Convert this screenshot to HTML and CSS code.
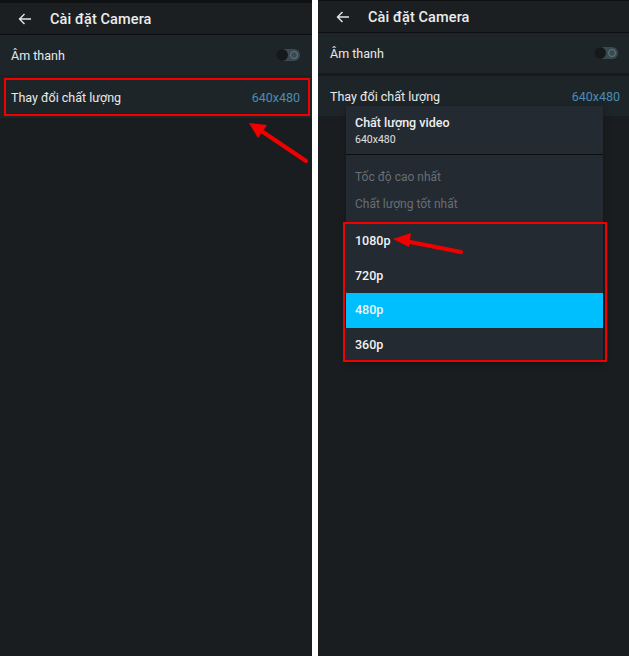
FILE: index.html
```html
<!DOCTYPE html>
<html lang="vi">
<head>
<meta charset="utf-8">
<link rel="stylesheet" href="styles.css">
</head>
<body>
<div class="page">
  <section class="panel panel-left">
    <div class="topstrip"></div>
    <header class="appbar">
      <svg class="back" viewBox="0 0 14 12" width="14" height="12"><path d="M13 6H1.5M6.5 1L1.5 6l5 5" fill="none" stroke="#e6e6e6" stroke-width="1.4"/></svg>
      <h1 class="title">Cài đặt Camera</h1>
    </header>
    <div class="rows">
      <div class="row"><span class="label">Âm thanh</span><span class="toggle"><span class="knob"></span><span class="ring"></span></span></div>
      <div class="row tall"><span class="label">Thay đổi chất lượng</span><span class="value">640x480</span></div>
    </div>
    <div class="mark mark-left"></div>
    <svg class="arrow arrow-left" width="312" height="200" viewBox="0 0 312 200">
      <line x1="306" y1="161" x2="260" y2="130" stroke="#f20000" stroke-width="4" stroke-linecap="round"/>
      <polygon points="249,123 267,125 258,138" fill="#f20000"/>
    </svg>
  </section>
  <section class="panel panel-right">
    <div class="topstrip thin"></div>
    <header class="appbar">
      <svg class="back" viewBox="0 0 14 12" width="14" height="12"><path d="M13 6H1.5M6.5 1L1.5 6l5 5" fill="none" stroke="#e6e6e6" stroke-width="1.4"/></svg>
      <h1 class="title">Cài đặt Camera</h1>
    </header>
    <div class="rows split">
      <div class="row"><span class="label">Âm thanh</span><span class="toggle"><span class="knob"></span><span class="ring"></span></span></div>
      <div class="row"><span class="label">Thay đổi chất lượng</span><span class="value">640x480</span></div>
    </div>
    <div class="menu">
      <div class="menu-head">
        <div class="menu-title">Chất lượng video</div>
        <div class="menu-sub">640x480</div>
      </div>
      <div class="menu-disabled">
        <div class="dis">Tốc độ cao nhất</div>
        <div class="dis">Chất lượng tốt nhất</div>
      </div>
      <div class="menu-options">
        <div class="opt">1080p</div>
        <div class="opt">720p</div>
        <div class="opt active">480p</div>
        <div class="opt">360p</div>
      </div>
    </div>
    <div class="mark mark-right"></div>
    <svg class="arrow arrow-right" width="311" height="300" viewBox="0 0 311 300">
      <line x1="143" y1="252" x2="87" y2="241" stroke="#f20000" stroke-width="4" stroke-linecap="round"/>
      <polygon points="75,239 93,233 91,247" fill="#f20000"/>
    </svg>
  </section>
</div>
</body>
</html>
```
FILE: styles.css
```css
* { box-sizing: border-box; margin: 0; padding: 0; }
html, body { background: #ffffff; }
body { width: 629px; height: 656px; overflow: hidden; font-family: Roboto, "Noto Sans", "Liberation Sans", sans-serif; }
.page { display: flex; gap: 6px; height: 656px; }
.panel { position: relative; background: #1a1d20; height: 656px; display: flex; flex-direction: column; }
.panel-left { width: 312px; }
.panel-right { width: 311px; }
.topstrip { height: 3px; background: #0f1113; }
.topstrip.thin { height: 1px; }
.appbar { height: 32px; background: #1c1f22; border-bottom: 1px solid #0d0f11; display: flex; align-items: center; padding-left: 18px; padding-top: 1px; }
.back { display: block; margin-right: 18px; margin-top: -1px; }
.title { font-size: 14.5px; font-weight: 500; color: #ececec; letter-spacing: 0.1px; }
.rows { display: flex; flex-direction: column; gap: 2px; background: #1b2023; }
.rows.split { gap: 3px; background: #171a1d; }
.row { height: 40px; background: #1e2529; display: flex; align-items: center; justify-content: space-between; padding: 0 12px 0 11px; }
.row.tall { height: 41px; }
.panel-right .row { padding: 0 9px 0 12px; }
.label { font-size: 12.5px; color: #e9e9e9; }
.value { font-size: 12.5px; color: #4a8db5; }
.toggle { position: relative; width: 24px; height: 12px; border-radius: 6px; background: #3a4950; }
.panel-right .toggle { margin-right: 2px; }
.knob { position: absolute; left: 0; top: 0; width: 12px; height: 12px; border-radius: 50%; background: #16191b; }
.ring { position: absolute; right: 2px; top: 2px; width: 8px; height: 8px; border-radius: 50%; border: 1px solid #5f7883; }
.mark { position: absolute; border: 2px solid #f20000; }
.mark-left { left: 4px; top: 78px; width: 306px; height: 38px; }
.mark-right { left: 25px; top: 222px; width: 264px; height: 140px; }
.arrow { position: absolute; left: 0; top: 0; }
.menu { position: absolute; left: 28px; top: 106px; width: 257px; height: 256px; background: #232a31; box-shadow: 0 2px 6px rgba(0,0,0,0.35); }
.menu-head { height: 49px; padding: 9px 9px 0; border-bottom: 1px solid #0b0d0f; }
.menu-title { font-size: 12.5px; font-weight: 500; color: #f0f0f0; line-height: 15px; }
.menu-sub { font-size: 10.5px; color: #e0e0e0; line-height: 14px; margin-top: 3px; }
.menu-disabled { padding: 9px 0 6px; }
.dis { height: 27px; line-height: 27px; padding-left: 9px; font-size: 12px; color: #686e74; }
.opt { height: 34.5px; line-height: 34.5px; padding-left: 9px; font-size: 12.5px; font-weight: 500; color: #f2f2f2; }
.opt.active { background: #00bfff; }
```
